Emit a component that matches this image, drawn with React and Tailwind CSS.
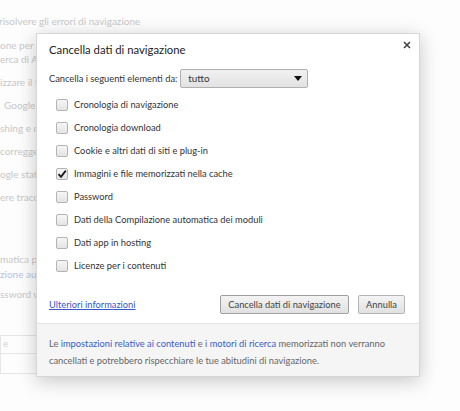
import React from "react"

const items = [
    {label: "Cronologia di navigazione", checked: false},
    {label: "Cronologia download", checked: false},
    {label: "Cookie e altri dati di siti e plug-in", checked: false},
    {label: "Immagini e file memorizzati nella cache", checked: true},
    {label: "Password", checked: false},
    {label: "Dati della Compilazione automatica dei moduli", checked: false},
    {label: "Dati app in hosting", checked: false},
    {label: "Licenze per i contenuti", checked: false},
]

function Checkbox({checked}){
    return <span className="w-[12px] h-[12px] rounded-[2px] border border-[#b4b4b4] bg-gradient-to-b from-[#f6f6f6] to-[#e4e4e4] flex items-center justify-center shrink-0">
        {checked&&<svg width="10" height="10" viewBox="0 0 10 10">
            <path d="M1.5 5.2 L4 7.8 L8.8 1.6" fill="none" stroke="#1a1a1a" strokeWidth="1.8"/>
        </svg>}
    </span>
}

function BackgroundPage(){
    // pagina delle impostazioni dietro la finestra, sbiadita
    return <div className="flex flex-col text-[10px] text-[#c8c8c8] leading-[14px] whitespace-nowrap">
        <div className="mt-[14px] -ml-[1px]">risolvere gli errori di navigazione</div>
        <div className="mt-[10px] w-[36px] overflow-hidden">one per il completamento delle ricerche</div>
        <div className="w-[36px] overflow-hidden">erca di Avvio</div>
        <div className="mt-[9px] w-[36px] overflow-hidden">izzare il traffico</div>
        <div className="mt-[9px] pl-[4px] w-[36px] overflow-hidden">Google il servizio</div>
        <div className="mt-[9px] w-[36px] overflow-hidden">shing e malware</div>
        <div className="mt-[9px] w-[36px] overflow-hidden">corregge l'ortografia</div>
        <div className="mt-[9px] w-[36px] overflow-hidden">ogle statistiche</div>
        <div className="mt-[9px] w-[36px] overflow-hidden">ere tracciamento</div>
        <div className="mt-[48px] w-[36px] overflow-hidden">matica per compilare</div>
        <div className="mt-[1px] w-[36px] overflow-hidden text-[#b8c4e6]">zione automatica</div>
        <div className="mt-[6px] w-[36px] overflow-hidden">ssword web</div>
        <div className="mt-[34px] w-[60px] h-[19px] border border-[#e6e6e6] pl-[2px] text-[#d4d4d4]">e</div>
        <div className="w-[60px] h-[20px] border border-t-0 border-[#e6e6e6]"></div>
    </div>
}

export default function App(){
    return <div className="relative w-[460px] h-[411px] overflow-hidden bg-[#fdfdfd]" style={{fontFamily: 'Lato, "Open Sans", sans-serif'}}>
        <BackgroundPage/>

        <div className="absolute left-[36px] top-[33px] w-[384px] bg-white border border-[#d6d6d6] shadow-[0_4px_18px_rgba(0,0,0,0.22)] text-[#333]">
            <button className="absolute right-[8px] top-[7px]">
                <svg width="8" height="8" viewBox="0 0 8 8"><path d="M1 1 L7 7 M7 1 L1 7" stroke="#444" strokeWidth="1.6"/></svg>
            </button>
            <div className="px-[12px] pt-[7px]">
                <h1 className="text-[11.3px] leading-[18px] text-[#222]">Cancella dati di navigazione</h1>
                <div className="flex items-center gap-[3px] mt-[10px] text-[9.3px]">
                    <span>Cancella i seguenti elementi da:</span>
                    <div className="w-[128px] h-[19px] rounded-[2px] border border-[#b0b0b0] bg-gradient-to-b from-[#f1f1f1] to-[#e2e2e2] flex items-center justify-between pl-[7px] pr-[5px] text-[9.8px]">
                        <span>tutto</span>
                        <svg width="8" height="5" viewBox="0 0 8 5"><path d="M0 0 H8 L4 5 Z" fill="#111"/></svg>
                    </div>
                </div>
                <div className="flex flex-col mt-[5px] pl-[7px] text-[9.3px]">
                    {items.map(item=><label key={item.label} className="h-[23px] flex items-center gap-[6px]">
                        <Checkbox checked={item.checked}/>
                        <span>{item.label}</span>
                    </label>)}
                </div>
                <div className="flex items-center justify-between mt-[18px] mb-[9px] pr-[2px] text-[9.3px]">
                    <a href="#" className="text-[#3857c4] underline">Ulteriori informazioni</a>
                    <div className="flex gap-[9px]">
                        <button className="h-[19px] w-[129px] rounded-[2px] border border-[#9f9f9f] bg-gradient-to-b from-[#f4f4f4] to-[#e1e1e1] text-[#444] leading-none">Cancella dati di navigazione</button>
                        <button className="h-[19px] w-[47px] rounded-[2px] border border-[#b5b5b5] bg-gradient-to-b from-[#f4f4f4] to-[#e1e1e1] text-[#444] leading-none">Annulla</button>
                    </div>
                </div>
            </div>
            <div className="border-t border-[#e4e4e4] bg-[#f5f5f5] px-[12px] pt-[11px] pb-[7px] text-[9.3px] leading-[17px] text-[#666] whitespace-nowrap">
                <div>Le <a href="#" className="text-[#3b5cc4]">impostazioni relative ai contenuti</a> e i <a href="#" className="text-[#3b5cc4]">motori di ricerca</a> memorizzati non verranno</div>
                <div>cancellati e potrebbero rispecchiare le tue abitudini di navigazione.</div>
            </div>
        </div>
    </div>
}
